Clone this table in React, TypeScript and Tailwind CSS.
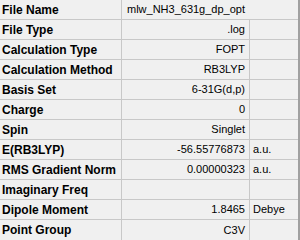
type Row = {
  label: string;
  value: string;
  unit?: string;
  span?: boolean;
};

const rows: Row[] = [
  { label: 'File Name', value: 'mlw_NH3_631g_dp_opt', span: true },
  { label: 'File Type', value: '.log' },
  { label: 'Calculation Type', value: 'FOPT' },
  { label: 'Calculation Method', value: 'RB3LYP' },
  { label: 'Basis Set', value: '6-31G(d,p)' },
  { label: 'Charge', value: '0' },
  { label: 'Spin', value: 'Singlet' },
  { label: 'E(RB3LYP)', value: '-56.55776873', unit: 'a.u.' },
  { label: 'RMS Gradient Norm', value: '0.00000323', unit: 'a.u.' },
  { label: 'Imaginary Freq', value: '' },
  { label: 'Dipole Moment', value: '1.8465', unit: 'Debye' },
  { label: 'Point Group', value: 'C3V' },
];

export default function App() {
  return (
    <div
      className="w-[300px] h-[240px] overflow-hidden bg-[#f0f0f0] border-r-2 border-[#a0a0a0] text-black"
      style={{ fontFamily: '"Liberation Sans", Arial, sans-serif' }}
    >
      {rows.map((r, i) => {
        const last = i === rows.length - 1;
        return (
          <div
            key={r.label}
            className={`flex h-[20px] ${last ? '' : 'border-b border-[#c8c8c8]'}`}
          >
            <div className="w-[122px] shrink-0 border-r border-[#c8c8c8] pl-[2px] flex items-center text-[12px] font-bold leading-none">
              {r.label}
            </div>
            {r.span ? (
              <div className="w-[176px] shrink-0 flex items-center pr-[53px] justify-end text-[11px] leading-none whitespace-nowrap">
                {r.value}
              </div>
            ) : (
              <>
                <div className="w-[128px] shrink-0 border-r border-[#c8c8c8] pr-[4px] flex items-center justify-end text-[11px] leading-none whitespace-nowrap">
                  {r.value}
                </div>
                <div className="w-[48px] shrink-0 pl-[3px] flex items-center text-[11px] leading-none">
                  {r.unit ?? ''}
                </div>
              </>
            )}
          </div>
        );
      })}
    </div>
  );
}
